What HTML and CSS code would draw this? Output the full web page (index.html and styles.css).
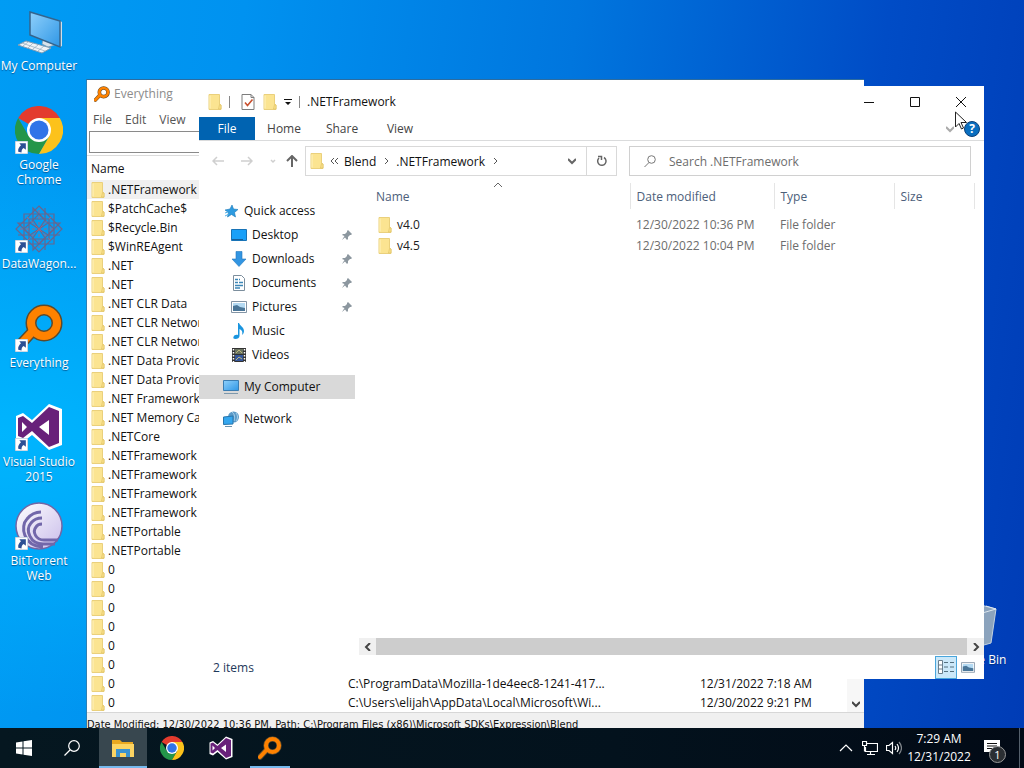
FILE: index.html
```html
<!DOCTYPE html>
<html lang="en">

<head>
    <meta charset="UTF-8">
    <meta name="viewport" content="width=device-width, initial-scale=1.0">
    <title>Desktop</title>
    <link rel="stylesheet" href="styles.css">
</head>

<body>

    <!-- Shared icons -->
    <svg class="sprite" aria-hidden="true">
        <defs>
            <linearGradient id="screen" x1="0" y1="0" x2="1" y2="1">
                <stop offset="0" stop-color="#8fd0fb" />
                <stop offset="1" stop-color="#2f97e6" />
            </linearGradient>
            <linearGradient id="torrent" x1="0" y1="0" x2="1" y2="1">
                <stop offset="0" stop-color="#ffffff" />
                <stop offset="1" stop-color="#c9bdea" />
            </linearGradient>
        </defs>
        <symbol id="folder" viewBox="0 0 14 16">
            <path d="M1 .5h10.500v9.500l1.500 1v4.500H1z" fill="#fbe491" stroke="#ead07c" />
            <path d="M11.500 10.500L10.500 15h2.500v-4z" fill="#fbe08a" stroke="#dcbf60" stroke-width=".6" />
            <path d="M2 1.500v13" stroke="#fff2bf" />
        </symbol>
        <symbol id="chrome" viewBox="0 0 48 48">
            <path d="M24 24L3.200 12A24 24 0 0 1 44.800 12z" fill="#e33b2e" />
            <path d="M24 48A24 24 0 0 1 3.200 12L13.600 30 24 36l10.400-6z" fill="#24964a" />
            <path d="M34.400 30L24 48A24 24 0 0 0 44.800 12H24z" fill="#fcc21b" />
            <circle cx="24" cy="24" r="12" fill="#fff" />
            <circle cx="24" cy="24" r="9.500" fill="#3074e8" />
        </symbol>
        <symbol id="everything" viewBox="0 0 48 48">
            <path d="M18 27L4 42" stroke="#5d4a2c" stroke-width="11" stroke-linecap="round" />
            <circle cx="29" cy="19" r="13" fill="none" stroke="#5d4a2c" stroke-width="11" />
            <path d="M18 27L4 42" stroke="#ff8200" stroke-width="8" stroke-linecap="round" />
            <circle cx="29" cy="19" r="13" fill="none" stroke="#ff8200" stroke-width="8" />
        </symbol>
        <symbol id="visual-studio" viewBox="0 0 48 48">
            <path d="M34 1l13 5v36l-13 5-17-15-9 7-7-3V13l7-3 9 7z" fill="#fff" />
            <path d="M34 4l10 4v32l-10 4-17-16-9 7-5-2V15l5-2 9 7zM34 17l-10 7 10 8zM7 19v10l5-5z" fill="#68217a" fill-rule="evenodd" />
        </symbol>
        <symbol id="shortcut" viewBox="0 0 12 12">
            <path d="M0 0h12v12H0z" fill="#fff" stroke="#9ab4cc" />
            <path d="M4 2h6v6L8 6.500C6.500 7.500 6 8.500 6 10.500L3 10c-.5-3 1-4.500 2.500-6z" fill="#2c4f94" />
        </symbol>
        <symbol id="pin" viewBox="0 0 12 12">
            <path d="M7 1l4 4-1 1H9L7 8v2L6 11 4 8.500 1 11l2.500-4L1 6l1-1h2l2-2V2z" fill="#8c979f" />
        </symbol>
        <symbol id="monitor" viewBox="0 0 16 16">
            <path d="M.5 1.500h15v10H.5z" fill="url(#screen)" stroke="#3b7db2" />
            <path d="M1 14.500h14" stroke="#7d98ac" />
        </symbol>
        <symbol id="picture" viewBox="0 0 16 16">
            <path d="M.5 2.500h15v11H.5z" fill="#fff" stroke="#8294a5" />
            <path d="M2 4h12v8H2z" fill="#b4daf3" />
            <path d="M2 7l4-1 3 2 5 1v3H2z" fill="#4a7698" />
        </symbol>
    </svg>

    <main class="desktop">

        <div class="desktop-icons">
            <button class="desktop-icon">
                <svg viewBox="0 0 48 48">
                    <path d="M28 33l10-2 4 3-2 4-7 2-6-3z" fill="#d8e3ec" stroke="#7b97ac" stroke-width=".7" />
                    <path d="M45 14l2 1v24l-2 1z" fill="#d2dde6" />
                    <path d="M15 5l30 9v26L15 28z" fill="url(#screen)" stroke="#35648c" stroke-width="1.500" />
                    <path d="M11 34L36 41l-9 5L3 38z" fill="#eef3f7" stroke="#7f9db5" />
                    <path d="M7 36l23 8M13 35l-5 4M18 36l-5 5M23 38l-5 4M29 39l-6 5" stroke="#91a9bb" stroke-width=".7" />
                </svg>
                <span>My Computer</span>
            </button>
            <button class="desktop-icon">
                <svg viewBox="0 0 48 48">
                    <use href="#chrome" width="48" height="48" />
                    <use href="#shortcut" y="35" width="13" height="13" />
                </svg>
                <span>Google Chrome</span>
            </button>
            <button class="desktop-icon">
                <svg viewBox="0 0 48 48">
                    <g fill="none" stroke="#67668f" stroke-width="1.200">
                        <path d="M9 9h30v30H9zM14 14h20v20H14zM24 1l23 23-23 23L1 24zM24 9l15 15-15 15L9 24z" />
                        <path d="M18 3l12 12-6 9-6-9zM30 3v12M18 45l12-12-6-9-6 9zM30 45V33M3 18l12 12 9-6-9-6zM3 30h12M45 18L33 30l-9-6 9-6zM45 30H33" />
                    </g>
                    <path d="M12 12l24 24M36 12L12 36M24 5v38M5 24h38" stroke="#a5657d" stroke-dasharray="3 3" />
                    <use href="#shortcut" y="35" width="13" height="13" />
                </svg>
                <span>DataWagon...</span>
            </button>
            <button class="desktop-icon">
                <svg viewBox="0 0 48 48">
                    <use href="#everything" width="48" height="48" />
                    <use href="#shortcut" y="35" width="13" height="13" />
                </svg>
                <span>Everything</span>
            </button>
            <button class="desktop-icon">
                <svg viewBox="0 0 48 48">
                    <use href="#visual-studio" width="48" height="48" />
                    <use href="#shortcut" y="35" width="13" height="13" />
                </svg>
                <span>Visual Studio 2015</span>
            </button>
            <button class="desktop-icon">
                <svg viewBox="0 0 48 48">
                    <circle cx="24" cy="24" r="23" fill="url(#torrent)" stroke="#7266a5" stroke-width="1.500" />
                    <path d="M43 38H29c-8 0-12-8-8-13 1-2 3-3 6-3M40 42H28c-13 0-18-14-12-21 3-4 7-5 11-5M28 45C8 44 5 24 12 17c4-5 9-7 14-7" fill="none" stroke="#7267aa" stroke-width="3" />
                    <use href="#shortcut" y="35" width="13" height="13" />
                </svg>
                <span>BitTorrent Web</span>
            </button>
        </div>

        <button class="desktop-icon recycle-bin">
            <svg viewBox="0 0 48 48">
                <path d="M4 8l22-5 19 5-5 34-14 4-16-5z" fill="#8ba3bd" stroke="#c3d2df" />
                <path d="M4 8l24 5 17-5-10-3" fill="none" stroke="#dce6ee" />
            </svg>
            <span>Recycle Bin</span>
        </button>

        <!-- Everything window -->
        <section class="window everything">
            <header class="everything-title">
                <svg viewBox="0 0 48 48"><use href="#everything" /></svg>
                <span>Everything</span>
            </header>
            <nav class="everything-menu">
                <button>File</button>
                <button>Edit</button>
                <button>View</button>
            </nav>
            <input class="everything-search" type="text" aria-label="Search">
            <div class="everything-results">
                <table class="results">
                    <thead>
                        <tr><th class="col-name">Name</th><th class="col-path"></th><th></th></tr>
                    </thead>
                    <tbody>
                        <tr class="selected"><td><svg><use href="#folder" /></svg>.NETFramework</td><td></td><td></td></tr>
                        <tr><td><svg><use href="#folder" /></svg>$PatchCache$</td><td></td><td></td></tr>
                        <tr><td><svg><use href="#folder" /></svg>$Recycle.Bin</td><td></td><td></td></tr>
                        <tr><td><svg><use href="#folder" /></svg>$WinREAgent</td><td></td><td></td></tr>
                        <tr><td><svg><use href="#folder" /></svg>.NET</td><td></td><td></td></tr>
                        <tr><td><svg><use href="#folder" /></svg>.NET</td><td></td><td></td></tr>
                        <tr><td><svg><use href="#folder" /></svg>.NET CLR Data</td><td></td><td></td></tr>
                        <tr><td><svg><use href="#folder" /></svg>.NET CLR Networking</td><td></td><td></td></tr>
                        <tr><td><svg><use href="#folder" /></svg>.NET CLR Networking</td><td></td><td></td></tr>
                        <tr><td><svg><use href="#folder" /></svg>.NET Data Provider</td><td></td><td></td></tr>
                        <tr><td><svg><use href="#folder" /></svg>.NET Data Provider</td><td></td><td></td></tr>
                        <tr><td><svg><use href="#folder" /></svg>.NET Framework</td><td></td><td></td></tr>
                        <tr><td><svg><use href="#folder" /></svg>.NET Memory Cache</td><td></td><td></td></tr>
                        <tr><td><svg><use href="#folder" /></svg>.NETCore</td><td></td><td></td></tr>
                        <tr><td><svg><use href="#folder" /></svg>.NETFramework</td><td></td><td></td></tr>
                        <tr><td><svg><use href="#folder" /></svg>.NETFramework</td><td></td><td></td></tr>
                        <tr><td><svg><use href="#folder" /></svg>.NETFramework</td><td></td><td></td></tr>
                        <tr><td><svg><use href="#folder" /></svg>.NETFramework</td><td></td><td></td></tr>
                        <tr><td><svg><use href="#folder" /></svg>.NETPortable</td><td></td><td></td></tr>
                        <tr><td><svg><use href="#folder" /></svg>.NETPortable</td><td></td><td></td></tr>
                        <tr><td><svg><use href="#folder" /></svg>0</td><td></td><td></td></tr>
                        <tr><td><svg><use href="#folder" /></svg>0</td><td></td><td></td></tr>
                        <tr><td><svg><use href="#folder" /></svg>0</td><td></td><td></td></tr>
                        <tr><td><svg><use href="#folder" /></svg>0</td><td></td><td></td></tr>
                        <tr><td><svg><use href="#folder" /></svg>0</td><td></td><td></td></tr>
                        <tr><td><svg><use href="#folder" /></svg>0</td><td></td><td></td></tr>
                        <tr><td><svg><use href="#folder" /></svg>0</td><td>C:\ProgramData\Mozilla-1de4eec8-1241-417...</td><td>12/31/2022 7:18 AM</td></tr>
                        <tr><td><svg><use href="#folder" /></svg>0</td><td>C:\Users\elijah\AppData\Local\Microsoft\Wi...</td><td>12/30/2022 9:21 PM</td></tr>
                    </tbody>
                </table>
                <div class="scroll-v">
                    <button aria-label="Scroll down"><svg viewBox="0 0 8 8"><path d="M0 2l4 4 4-4" /></svg></button>
                </div>
            </div>
            <footer class="everything-status">Date Modified: 12/30/2022 10:36 PM, Path: C:\Program Files (x86)\Microsoft SDKs\Expression\Blend</footer>
        </section>

        <!-- Explorer window -->
        <section class="window explorer">
            <header class="explorer-title">
                <svg class="icon-folder"><use href="#folder" /></svg>
                <i class="divider"></i>
                <button class="quick" aria-label="Properties">
                    <svg viewBox="0 0 14 16">
                        <path d="M1 .5h9l3 3v12H1z" fill="#fff" stroke="#7d7d7d" />
                        <path d="M10 .5v3h3" fill="none" stroke="#7d7d7d" />
                        <path d="M4 8.500l2.500 3 5-6" fill="none" stroke="#c8502e" stroke-width="1.600" />
                    </svg>
                </button>
                <button class="quick" aria-label="New folder"><svg><use href="#folder" /></svg></button>
                <button class="customize" aria-label="Customize toolbar">
                    <svg viewBox="0 0 8 8"><path d="M0 1h8v1H0zM1 4h6L4 7z" fill="#111" /></svg>
                </button>
                <i class="divider"></i>
                <h1>.NETFramework</h1>
                <div class="window-buttons">
                    <button aria-label="Minimize"><svg viewBox="0 0 10 10"><path d="M0 5.500h10" /></svg></button>
                    <button aria-label="Maximize"><svg viewBox="0 0 10 10"><path d="M.5 .5h9v9h-9z" /></svg></button>
                    <button aria-label="Close"><svg viewBox="0 0 10 10"><path d="M0 0l10 10M10 0L0 10" /></svg></button>
                </div>
            </header>

            <nav class="ribbon">
                <button class="tab tab-file">File</button>
                <button class="tab">Home</button>
                <button class="tab">Share</button>
                <button class="tab">View</button>
                <div class="ribbon-end">
                    <button class="expand" aria-label="Expand ribbon"><svg viewBox="0 0 8 8"><path d="M0 2l4 4 4-4" /></svg></button>
                    <button class="help" aria-label="Help">?</button>
                </div>
                <svg class="pointer" viewBox="0 0 12 19">
                    <path d="M.5 1v15l3.500-3.500L6.500 18l2-1L6 11.500h5.500z" fill="#fff" stroke="#222" />
                </svg>
            </nav>

            <div class="nav-bar">
                <div class="nav-arrows">
                    <button aria-label="Back"><svg viewBox="0 0 12 12"><path d="M12 6H1M5 2L1 6l4 4" /></svg></button>
                    <button aria-label="Forward"><svg viewBox="0 0 12 12"><path d="M0 6h11M7 2l4 4-4 4" /></svg></button>
                    <button class="recent" aria-label="Recent"><svg viewBox="0 0 12 12"><path d="M1 5l2 2 2-2" /></svg></button>
                    <button class="up" aria-label="Up"><svg viewBox="0 0 12 12"><path d="M6 12V1M1 6l5-5 5 5" /></svg></button>
                </div>
                <div class="address">
                    <svg class="icon-folder"><use href="#folder" /></svg>
                    <svg class="chevron" viewBox="0 0 8 8"><path d="M4 1L1 4l3 3M8 1L5 4l3 3" /></svg>
                    <a href="#">Blend</a>
                    <svg class="chevron" viewBox="0 0 8 8"><path d="M3 1l3 3-3 3" /></svg>
                    <a href="#">.NETFramework</a>
                    <svg class="chevron" viewBox="0 0 8 8"><path d="M3 1l3 3-3 3" /></svg>
                    <button class="history" aria-label="Previous locations"><svg viewBox="0 0 8 8"><path d="M0 2l4 4 4-4" /></svg></button>
                    <button class="refresh" aria-label="Refresh"><svg viewBox="0 0 12 12"><path d="M3 3a4.200 4.200 0 1 0 5-.5M2 1.500h3.500V5" /></svg></button>
                </div>
                <label class="search">
                    <svg viewBox="0 0 12 12"><circle cx="7.500" cy="4.500" r="3.800" /><path d="M5 7.500L.5 12" /></svg>
                    <input type="text" placeholder="Search .NETFramework" aria-label="Search .NETFramework">
                </label>
            </div>

            <div class="explorer-body">
                <nav class="sidebar">
                    <a class="side-item" href="#">
                        <svg viewBox="0 0 16 16"><path d="M9 2l1.500 4 4.500.5-3.500 3 1 4.500-4-2.500L4.500 14l1-4.500L2 7l5-1z" fill="#2d9be0" stroke="#1b79b8" stroke-width=".6" /><path d="M2 10l3-1M2 13l4-2" stroke="#4fb0e8" /></svg>
                        Quick access
                    </a>
                    <a class="side-item child" href="#">
                        <svg viewBox="0 0 16 16"><path d="M.5 2.500h15v11H.5z" fill="#19a0f8" stroke="#1873b6" /><path d="M1 12.500h11" stroke="#155f9b" /></svg>
                        Desktop <svg class="pin"><use href="#pin" /></svg>
                    </a>
                    <a class="side-item child" href="#">
                        <svg viewBox="0 0 16 16"><path d="M5 .5h6V8h4l-7 7.500L1 8h4z" fill="#3295e2" stroke="#2277bd" stroke-width=".6" /></svg>
                        Downloads <svg class="pin"><use href="#pin" /></svg>
                    </a>
                    <a class="side-item child" href="#">
                        <svg viewBox="0 0 16 16"><path d="M2.500 .5h8l3 3v12h-11z" fill="#fff" stroke="#7c8e9d" /><path d="M4 4.500h3M8 4.500h1M4 7.500h3M8 7.500h4M4 10.500h8M4 13h5" stroke="#3c86b6" stroke-width="1.400" /></svg>
                        Documents <svg class="pin"><use href="#pin" /></svg>
                    </a>
                    <a class="side-item child" href="#">
                        <svg viewBox="0 0 16 16"><use href="#picture" /></svg>
                        Pictures <svg class="pin"><use href="#pin" /></svg>
                    </a>
                    <a class="side-item child" href="#">
                        <svg viewBox="0 0 16 16"><path d="M7 0h1c1 3 5 4 5 8 0 2-1 3-2 4 1-3 0-5-2.500-6v7c0 2-2 3-4 3s-2.500-1-2-2c.500-2 2.500-2.500 4.500-2z" fill="#1a95df" /></svg>
                        Music
                    </a>
                    <a class="side-item child" href="#">
                        <svg viewBox="0 0 16 16"><path d="M1 1h14v14H1z" fill="#333" /><path d="M4 2h8v5H4z" fill="#6a7460" /><path d="M4 8h8v6H4z" fill="#35579a" /><path d="M5 6l3-3 3 3M5 13l3-3 3 2" stroke="#bfb77c" fill="none" /><path d="M2.500 2v13M13.500 2v13" stroke="#fff" stroke-width="1.500" stroke-dasharray="1.500 1.500" /></svg>
                        Videos
                    </a>
                    <a class="side-item spaced current" href="#">
                        <svg viewBox="0 0 16 16"><use href="#monitor" /></svg>
                        My Computer
                    </a>
                    <a class="side-item spaced" href="#">
                        <svg viewBox="0 0 16 16"><circle cx="10.500" cy="6" r="5.500" fill="#5c9bc8" /><path d="M9 1c3 2 3 6 2 9M13 2c2 2 2 6 0 8" stroke="#a9d0ea" fill="none" /><path d="M.5 6l9.500-1v8l-9.500.5z" fill="#35a7ef" stroke="#2875ab" /><path d="M2 15.500h7" stroke="#6b93ae" /></svg>
                        Network
                    </a>
                </nav>

                <div class="files">
                    <table class="file-table">
                        <thead>
                            <tr>
                                <th class="file-name">Name<svg class="sort" viewBox="0 0 8 4"><path d="M0 4l4-4 4 4" /></svg></th>
                                <th class="file-date">Date modified</th>
                                <th class="file-type">Type</th>
                                <th class="file-size">Size</th>
                                <th class="file-rest"></th>
                            </tr>
                        </thead>
                        <tbody>
                            <tr><td><svg class="icon-folder"><use href="#folder" /></svg>v4.0</td><td>12/30/2022 10:36 PM</td><td>File folder</td><td></td><td></td></tr>
                            <tr><td><svg class="icon-folder"><use href="#folder" /></svg>v4.5</td><td>12/30/2022 10:04 PM</td><td>File folder</td><td></td><td></td></tr>
                        </tbody>
                    </table>
                    <div class="scroll-h">
                        <button aria-label="Scroll left"><svg viewBox="0 0 8 8"><path d="M6 0L2 4l4 4" /></svg></button>
                        <div class="thumb"></div>
                        <button aria-label="Scroll right"><svg viewBox="0 0 8 8"><path d="M2 0l4 4-4 4" /></svg></button>
                    </div>
                </div>
            </div>

            <footer class="explorer-status">
                <span>2 items</span>
                <div class="views">
                    <button class="active" aria-label="Details">
                        <svg viewBox="0 0 16 14"><path d="M.5 .5h4v13h-4zM.5 5h4M.5 9h4" fill="#fff" stroke="#6b7f8d" /><path d="M6 2.500h10M6 7h10M6 11.500h10" stroke="#54707f" stroke-dasharray="4 2" /></svg>
                    </button>
                    <button aria-label="Large icons"><svg viewBox="0 1 16 13"><use href="#picture" width="16" height="16" /></svg></button>
                </div>
            </footer>
        </section>
    </main>

    <!-- Taskbar -->
    <footer class="taskbar">
        <button aria-label="Start"><svg class="start" viewBox="0 0 16 16"><path d="M0 2.500l6.500-1v6H0zM7.500 1.300L16 0v7.500H7.500zM0 8.500h6.500v6l-6.500-1zM7.500 8.500H16V16l-8.500-1.300z" fill="#fff" /></svg></button>
        <button aria-label="Search"><svg class="start" viewBox="0 0 16 16"><circle cx="10" cy="6" r="5.300" /><path d="M6 10L.5 15.500" /></svg></button>
        <div class="apps">
            <button class="open focused" aria-label="File Explorer">
                <svg viewBox="0 0 24 24"><path d="M1 4h8l2 2h11v4H1z" fill="#e9a820" /><path d="M1 8h22v13H1z" fill="#fcd462" /><path d="M5 13h14v8h-4v-4H9v4H5z" fill="#3a92d0" /></svg>
            </button>
            <button aria-label="Google Chrome"><svg><use href="#chrome" /></svg></button>
            <button aria-label="Visual Studio"><svg><use href="#visual-studio" /></svg></button>
            <button class="open" aria-label="Everything"><svg><use href="#everything" /></svg></button>
        </div>
        <div class="tray">
            <button aria-label="Hidden icons"><svg viewBox="0 0 16 16"><path d="M2 11l6-6 6 6" /></svg></button>
            <button aria-label="Network"><svg viewBox="0 0 16 16"><path d="M5 3.500h10.500v8H3.500V7M8.500 11.500v3M5 14.500h8M.5 1.500h4v4h-4zM2.500 5.500v6" /></svg></button>
            <button aria-label="Volume"><svg viewBox="0 0 16 16"><path d="M.5 5.500H3l3.500-3v11L3 10.500H.5zM9 6q1.500 2 0 4M11 4q3 4 0 8" /><path d="M13 2q5 6 0 12" opacity=".5" /></svg></button>
            <button class="clock">7:29 AM<br>12/31/2022</button>
            <button class="notifications" aria-label="Notifications">
                <svg viewBox="0 0 16 16"><path d="M0 0h16v12h-4v4l-4-4H0z" fill="#fff" stroke="none" /><path d="M3 3.500h10M3 6h10M3 8.500h7" stroke="#111" /></svg>
                <span class="badge">1</span>
            </button>
        </div>
    </footer>

</body>

</html>
```
FILE: styles.css
```css
* {
    box-sizing: border-box;
}

body {
    margin: 0;
    height: 100vh;
    display: flex;
    flex-direction: column;
    overflow: hidden;
    font-family: "Open Sans", "Noto Sans", sans-serif;
    font-size: 12px;
    line-height: 15px;
    color: #111;
}

button {
    margin: 0;
    padding: 0;
    border: 0;
    background: none;
    font: inherit;
    color: inherit;
}

a {
    color: inherit;
    text-decoration: none;
}

svg {
    display: block;
    flex: none;
}

.sprite {
    position: absolute;
    width: 0;
    height: 0;
}

/* Desktop */
.desktop {
    position: relative;
    flex: 1;
    min-height: 0;
    overflow: hidden;
    background:
        radial-gradient(ellipse at 0 60%, rgba(0, 184, 255, 0.9), rgba(0, 184, 255, 0) 45%),
        linear-gradient(97deg, #009cf4 0%, #0092f0 22%, #0076de 52%, #004cc6 80%, #003cb6 100%);
}

.desktop-icons {
    display: grid;
    grid-auto-rows: 99px;
    width: 78px;
    padding-top: 7px;
}

.desktop-icon {
    display: flex;
    flex-direction: column;
    align-items: center;
    justify-content: flex-start;
    gap: 3px;
    width: 78px;
    color: #fff;
    text-align: center;
    text-shadow: 0 1px 1px rgba(0, 40, 90, 0.6);
}

.desktop-icon svg {
    width: 48px;
    height: 48px;
}

.recycle-bin {
    position: absolute;
    right: 10px;
    top: 601px;
}

/* Windows */
.window {
    position: absolute;
    display: flex;
    flex-direction: column;
    background: #fff;
}

.everything {
    left: 86px;
    top: 79px;
    width: 778px;
    border-top: 1px solid #2d6c9f;
    border-left: 1px solid #2d7fb5;
}

.everything-title {
    display: flex;
    align-items: center;
    gap: 4px;
    height: 27px;
    padding-left: 7px;
    color: #8c8c8c;
}

.everything-title svg {
    width: 16px;
    height: 16px;
}

.everything-menu {
    display: flex;
    gap: 13px;
    height: 24px;
    padding-left: 6px;
    color: #555;
}

.everything-menu button {
    height: 24px;
}

.everything-search {
    height: 22px;
    margin: 0 2px;
    border: 1px solid #8a8a8a;
}

.everything-results {
    display: flex;
    margin-top: 2px;
    border-top: 1px solid #dcdcdc;
}

.results {
    flex: 1;
    table-layout: fixed;
    border-collapse: collapse;
}

.results th,
.results td {
    height: 19px;
    padding: 0 4px;
    font-weight: 400;
    text-align: left;
    white-space: nowrap;
}

.results th {
    height: 24px;
}

.results td svg {
    float: left;
    width: 14px;
    height: 16px;
    margin-right: 3px;
}

.results .selected {
    background: #f0f0f0;
}

.col-name {
    width: 257px;
}

.col-path {
    width: 352px;
}

.scroll-v {
    display: flex;
    align-items: flex-end;
    width: 17px;
    background: #f7f7f7;
}

.scroll-v button {
    display: grid;
    place-items: center;
    width: 17px;
    height: 17px;
}

.scroll-v svg,
.scroll-h svg {
    width: 8px;
    height: 8px;
    fill: none;
    stroke: #444;
    stroke-width: 2;
}

.everything-status {
    height: 23px;
    padding-top: 4px;
    border-top: 1px solid #d7d7d7;
    background: #f0f0f0;
    font-family: "DejaVu Sans Condensed", "DejaVu Sans", sans-serif;
    font-size: 11px;
    white-space: nowrap;
}

/* Explorer */
.explorer {
    left: 199px;
    top: 86px;
    width: 785px;
    height: 593px;
}

.icon-folder {
    width: 14px;
    height: 16px;
}

.explorer-title {
    display: flex;
    align-items: center;
    height: 31px;
    padding-left: 9px;
}

.explorer-title h1 {
    margin: 0;
    flex: 1;
    font-size: 12px;
    font-weight: 400;
}

.divider {
    width: 1px;
    height: 12px;
    margin: 0 7px;
    background: #888;
}

.quick {
    width: 22px;
}

.quick svg {
    width: 14px;
    height: 16px;
    margin: 0 auto;
}

.customize svg {
    width: 8px;
    height: 8px;
    margin-left: 3px;
}

.window-buttons {
    display: flex;
}

.window-buttons button {
    display: grid;
    place-items: center;
    width: 46px;
    height: 30px;
}

.window-buttons svg {
    width: 10px;
    height: 10px;
    fill: none;
    stroke: #111;
}

.ribbon {
    position: relative;
    display: flex;
    height: 24px;
    border-bottom: 1px solid #dadbdc;
    color: #444;
}

.tab {
    width: 58px;
}

.tab-file {
    width: 56px;
    background: #0063b1;
    color: #fff;
}

.ribbon-end {
    display: flex;
    align-items: center;
    gap: 10px;
    margin-left: auto;
    padding-right: 4px;
}

.expand svg,
.history svg {
    width: 8px;
    height: 8px;
    fill: none;
    stroke: #aaa;
    stroke-width: 2;
}

.help {
    position: relative;
    z-index: 1;
    width: 16px;
    height: 16px;
    border-radius: 50%;
    border: 1px solid #0b3f78;
    background: #0a6fc0;
    color: #fff;
    font-weight: 700;
    line-height: 14px;
}

/* Mouse pointer lies over the ribbon */
.pointer {
    position: absolute;
    right: 17px;
    top: -6px;
    width: 12px;
    height: 19px;
}

.nav-bar {
    display: flex;
    align-items: center;
    height: 40px;
    padding: 0 13px 0 10px;
}

.nav-arrows {
    display: flex;
    width: 96px;
}

.nav-arrows button {
    width: 29px;
}

.nav-arrows .recent {
    width: 16px;
}

.nav-arrows .up {
    width: 20px;
}

.nav-arrows svg {
    width: 12px;
    height: 12px;
    margin-left: 3px;
    fill: none;
    stroke: #cfcfcf;
    stroke-width: 1.5;
}

.nav-arrows .up svg {
    stroke: #666;
    stroke-width: 2;
}

.address {
    display: flex;
    align-items: center;
    width: 312px;
    height: 30px;
    padding-left: 4px;
    border: 1px solid #d9d9d9;
}

.chevron {
    width: 8px;
    height: 8px;
    margin: 0 6px;
    fill: none;
    stroke: #555;
}

.history {
    margin-left: auto;
    padding: 0 10px;
}

.history svg {
    stroke: #666;
}

.refresh {
    display: grid;
    place-items: center;
    width: 30px;
    height: 28px;
    border-left: 1px solid #d9d9d9;
}

.refresh svg {
    width: 12px;
    height: 12px;
    fill: none;
    stroke: #666;
    stroke-width: 1.5;
}

.search {
    display: flex;
    align-items: center;
    gap: 13px;
    flex: 1;
    height: 30px;
    margin-left: 12px;
    padding-left: 14px;
    border: 1px solid #d0d0d0;
}

.search svg {
    width: 12px;
    height: 12px;
    fill: none;
    stroke: #777;
}

.search input {
    flex: 1;
    min-width: 0;
    padding: 0;
    border: 0;
    outline: 0;
    background: none;
    font: inherit;
}

.search input::placeholder {
    color: #6d6d6d;
}

.explorer-body {
    display: flex;
    flex: 1;
}

.sidebar {
    width: 156px;
    padding-top: 18px;
}

.side-item {
    display: flex;
    align-items: center;
    gap: 5px;
    height: 24px;
    padding: 0 2px 1px 24px;
}

.side-item svg {
    width: 16px;
    height: 16px;
}

.side-item.child {
    padding-left: 32px;
}

.side-item .pin {
    width: 12px;
    height: 12px;
    margin-left: auto;
}

.side-item.spaced {
    margin-top: 8px;
}

.side-item.current {
    background: #d9d9d9;
}

.files {
    display: flex;
    flex-direction: column;
    justify-content: space-between;
    flex: 1;
    padding: 2px 0 0 4px;
}

.file-table {
    width: 100%;
    table-layout: fixed;
    border-collapse: collapse;
    color: #6d6d6d;
}

.file-table th {
    height: 26px;
    padding: 0 6px;
    border-right: 1px solid #e5e5e5;
    font-weight: 400;
    text-align: left;
    color: #4c607a;
}

.file-table th:last-child {
    border-right: 0;
}

.file-table td {
    height: 21px;
    padding: 0 6px;
}

.file-table tbody::before {
    content: "";
    display: block;
    height: 5px;
}

.file-table .file-name {
    position: relative;
    width: 271px;
    padding-left: 17px;
}

.file-table td:first-child {
    padding-left: 19px;
    color: #222;
}

.file-table .icon-folder {
    float: left;
    margin-right: 5px;
}

.sort {
    position: absolute;
    left: 50%;
    top: 0;
    width: 8px;
    height: 4px;
    fill: none;
    stroke: #666;
}

.file-date {
    width: 144px;
}

.file-type {
    width: 120px;
}

.file-size {
    width: 80px;
}

.scroll-h {
    display: flex;
    height: 17px;
    background: #f0f0f0;
}

.scroll-h button {
    display: grid;
    place-items: center;
    width: 17px;
}

.scroll-h .thumb {
    flex: 1;
    background: #cdcdcd;
}

.explorer-status {
    display: flex;
    align-items: center;
    justify-content: space-between;
    height: 24px;
    padding: 0 5px 0 14px;
    color: #1e395b;
}

.views {
    display: flex;
}

.views button {
    display: grid;
    place-items: center;
    width: 22px;
    height: 23px;
    border: 1px solid transparent;
}

.views .active {
    border-color: #4aa6dc;
    background: #cbe8f9;
}

.views svg {
    width: 16px;
    height: 14px;
}

.views button:last-child svg {
    width: 14px;
    height: 12px;
}

/* Taskbar */
.taskbar {
    display: flex;
    height: 40px;
    background: linear-gradient(90deg, #051720, #03121d 60%, #020a16);
    color: #fff;
}

.taskbar button {
    display: grid;
    place-items: center;
    width: 48px;
    height: 40px;
}

.taskbar svg {
    width: 24px;
    height: 24px;
    fill: none;
    stroke-width: 1.2;
}

.taskbar .start {
    width: 16px;
    height: 16px;
    stroke: #fff;
}

.taskbar button:first-child .start {
    stroke: none;
}

.apps {
    display: flex;
    gap: 1px;
    margin-left: 3px;
}

.taskbar .open {
    background: linear-gradient(#76b9ed, #76b9ed) bottom / 40px 2px no-repeat;
}

.taskbar .focused {
    background: linear-gradient(#76b9ed, #76b9ed) bottom / 100% 2px no-repeat #38474f;
}

.tray {
    display: flex;
    margin-left: auto;
    padding-right: 4px;
}

.tray button {
    width: 24px;
}

.tray svg {
    width: 16px;
    height: 16px;
    stroke: #fff;
}

.tray .clock {
    display: block;
    width: 66px;
    line-height: 18px;
}

.tray .notifications {
    position: relative;
    width: 48px;
    border-right: 1px solid #55606c;
}

.notifications svg {
    margin-right: 8px;
}

.badge {
    position: absolute;
    right: 13px;
    bottom: 5px;
    width: 17px;
    height: 17px;
    border: 1px solid #999;
    border-radius: 50%;
    background: #2b2f33;
    font-size: 11px;
    line-height: 15px;
    text-align: center;
}
```
